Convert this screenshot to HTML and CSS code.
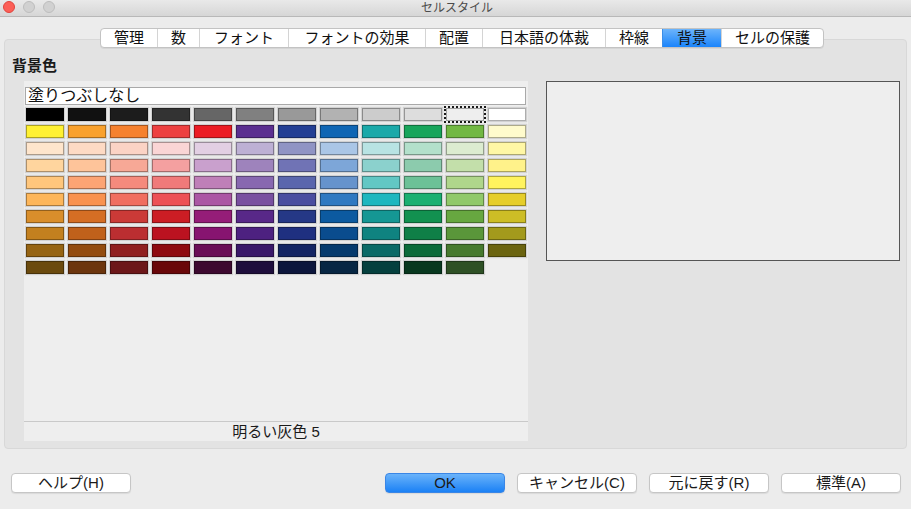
FILE: index.html
```html
<!DOCTYPE html>
<html lang="ja">
<head>
<meta charset="utf-8">
<title>セルスタイル</title>
<link rel="stylesheet" href="styles.css">
</head>
<body>
<div class="titlebar">
  <div class="lights">
    <span class="light red"></span>
    <span class="light"></span>
    <span class="light"></span>
  </div>
  <div class="title">セルスタイル</div>
</div>
<div class="content">
  <div class="tabs">
    <div class="tab">管理</div>
    <div class="tab">数</div>
    <div class="tab">フォント</div>
    <div class="tab">フォントの効果</div>
    <div class="tab">配置</div>
    <div class="tab">日本語の体裁</div>
    <div class="tab">枠線</div>
    <div class="tab active">背景</div>
    <div class="tab">セルの保護</div>
  </div>
  <div class="panel">
    <div class="heading">背景色</div>
    <div class="panel-body">
      <div class="colorbox">
        <div class="nofill">塗りつぶしなし</div>
        <div class="grid">
          <span class="sw" style="background:#000000"></span>
          <span class="sw" style="background:#111111"></span>
          <span class="sw" style="background:#1c1c1c"></span>
          <span class="sw" style="background:#333333"></span>
          <span class="sw" style="background:#666666"></span>
          <span class="sw" style="background:#808080"></span>
          <span class="sw" style="background:#999999"></span>
          <span class="sw" style="background:#b2b2b2"></span>
          <span class="sw" style="background:#cccccc"></span>
          <span class="sw" style="background:#dddddd"></span>
          <span class="sw selected" style="background:#eeeeee"></span>
          <span class="sw" style="background:#ffffff"></span>

          <span class="sw" style="background:#fff133"></span>
          <span class="sw" style="background:#f9a12d"></span>
          <span class="sw" style="background:#f6812e"></span>
          <span class="sw" style="background:#ed4040"></span>
          <span class="sw" style="background:#ec1c24"></span>
          <span class="sw" style="background:#5b2f90"></span>
          <span class="sw" style="background:#233f94"></span>
          <span class="sw" style="background:#0f66b4"></span>
          <span class="sw" style="background:#1ba9a9"></span>
          <span class="sw" style="background:#18a55b"></span>
          <span class="sw" style="background:#72b843"></span>
          <span class="sw" style="background:#fffbcc"></span>

          <span class="sw" style="background:#fee5cc"></span>
          <span class="sw" style="background:#fddac4"></span>
          <span class="sw" style="background:#fbd3c5"></span>
          <span class="sw" style="background:#fad5d5"></span>
          <span class="sw" style="background:#e2cfe3"></span>
          <span class="sw" style="background:#bdb0d4"></span>
          <span class="sw" style="background:#9094c4"></span>
          <span class="sw" style="background:#aac6e6"></span>
          <span class="sw" style="background:#b8e3e3"></span>
          <span class="sw" style="background:#b3e0cb"></span>
          <span class="sw" style="background:#dcecd0"></span>
          <span class="sw" style="background:#fff7a5"></span>

          <span class="sw" style="background:#ffd59e"></span>
          <span class="sw" style="background:#fec49a"></span>
          <span class="sw" style="background:#f7a896"></span>
          <span class="sw" style="background:#f4a0a0"></span>
          <span class="sw" style="background:#c9a0cd"></span>
          <span class="sw" style="background:#9e83bc"></span>
          <span class="sw" style="background:#7073b5"></span>
          <span class="sw" style="background:#7da6d8"></span>
          <span class="sw" style="background:#8bd1cd"></span>
          <span class="sw" style="background:#8ccbad"></span>
          <span class="sw" style="background:#c3dfaa"></span>
          <span class="sw" style="background:#fff28a"></span>

          <span class="sw" style="background:#ffc67c"></span>
          <span class="sw" style="background:#fca474"></span>
          <span class="sw" style="background:#f58a7d"></span>
          <span class="sw" style="background:#f07a7a"></span>
          <span class="sw" style="background:#bf7fb8"></span>
          <span class="sw" style="background:#8868b0"></span>
          <span class="sw" style="background:#5a66ad"></span>
          <span class="sw" style="background:#6693cc"></span>
          <span class="sw" style="background:#62c7c4"></span>
          <span class="sw" style="background:#6cc197"></span>
          <span class="sw" style="background:#afd68b"></span>
          <span class="sw" style="background:#fff35e"></span>

          <span class="sw" style="background:#fdb65a"></span>
          <span class="sw" style="background:#f9924f"></span>
          <span class="sw" style="background:#f06e60"></span>
          <span class="sw" style="background:#ed5055"></span>
          <span class="sw" style="background:#ab57a4"></span>
          <span class="sw" style="background:#7950a0"></span>
          <span class="sw" style="background:#4b4ea0"></span>
          <span class="sw" style="background:#2f79c1"></span>
          <span class="sw" style="background:#1eb7bf"></span>
          <span class="sw" style="background:#1bb071"></span>
          <span class="sw" style="background:#91c96a"></span>
          <span class="sw" style="background:#e6ce2a"></span>

          <span class="sw" style="background:#d98e2b"></span>
          <span class="sw" style="background:#d56e24"></span>
          <span class="sw" style="background:#cb3a37"></span>
          <span class="sw" style="background:#cc1d24"></span>
          <span class="sw" style="background:#951d78"></span>
          <span class="sw" style="background:#582888"></span>
          <span class="sw" style="background:#253886"></span>
          <span class="sw" style="background:#0c5aa0"></span>
          <span class="sw" style="background:#159794"></span>
          <span class="sw" style="background:#129150"></span>
          <span class="sw" style="background:#67a740"></span>
          <span class="sw" style="background:#cdbd26"></span>

          <span class="sw" style="background:#c3801f"></span>
          <span class="sw" style="background:#c0611b"></span>
          <span class="sw" style="background:#bb2e31"></span>
          <span class="sw" style="background:#bb1220"></span>
          <span class="sw" style="background:#871470"></span>
          <span class="sw" style="background:#4d2180"></span>
          <span class="sw" style="background:#1f3080"></span>
          <span class="sw" style="background:#0a4c8e"></span>
          <span class="sw" style="background:#0f8380"></span>
          <span class="sw" style="background:#0f7f47"></span>
          <span class="sw" style="background:#5a963a"></span>
          <span class="sw" style="background:#a39a1c"></span>

          <span class="sw" style="background:#966413"></span>
          <span class="sw" style="background:#934c10"></span>
          <span class="sw" style="background:#902020"></span>
          <span class="sw" style="background:#8e0a10"></span>
          <span class="sw" style="background:#6a0e57"></span>
          <span class="sw" style="background:#3a1869"></span>
          <span class="sw" style="background:#142563"></span>
          <span class="sw" style="background:#053a6d"></span>
          <span class="sw" style="background:#0b6a67"></span>
          <span class="sw" style="background:#0c6b3a"></span>
          <span class="sw" style="background:#477a2e"></span>
          <span class="sw" style="background:#6b6410"></span>

          <span class="sw" style="background:#6b4a0e"></span>
          <span class="sw" style="background:#6c350d"></span>
          <span class="sw" style="background:#6c1719"></span>
          <span class="sw" style="background:#690709"></span>
          <span class="sw" style="background:#3d0930"></span>
          <span class="sw" style="background:#1e0e3c"></span>
          <span class="sw" style="background:#0c163c"></span>
          <span class="sw" style="background:#072643"></span>
          <span class="sw" style="background:#05403e"></span>
          <span class="sw" style="background:#08381f"></span>
          <span class="sw" style="background:#2e5025"></span>
        </div>
        <div class="spacer"></div>
        <div class="status">明るい灰色 5</div>
      </div>
      <div class="preview"></div>
    </div>
  </div>
  <div class="buttons">
    <button class="btn">ヘルプ(H)</button>
    <div class="btn-group">
      <button class="btn default">OK</button>
      <button class="btn">キャンセル(C)</button>
      <button class="btn">元に戻す(R)</button>
      <button class="btn">標準(A)</button>
    </div>
  </div>
</div>
</body>
</html>
```

FILE: styles.css
```css
* { box-sizing: border-box; }

html, body {
  margin: 0;
  padding: 0;
}

body {
  width: 911px;
  height: 509px;
  overflow: hidden;
  background: #ececec;
  font-family: "Liberation Sans", "Noto Sans CJK JP", sans-serif;
  color: #1a1a1a;
}

.titlebar {
  height: 17px;
  background: linear-gradient(#e9e9e9, #d6d6d6);
  border-bottom: 1px solid #b8b8b8;
  display: flex;
  align-items: flex-start;
  position: relative;
}

.lights {
  display: flex;
  gap: 8px;
  padding: 1px 0 0 3px;
}

.light {
  width: 12px;
  height: 12px;
  border-radius: 50%;
  background: #d1d1d1;
  border: 1px solid #bdbdbd;
}

.light.red {
  background: #fc5f57;
  border-color: #e0443e;
}

.title {
  position: absolute;
  left: 0;
  right: 0;
  top: 1px;
  text-align: center;
  font-size: 12px;
  line-height: 14px;
  color: #4b4b4b;
  padding-left: 3px;
}

.content {
  padding: 0 4px;
}

.tabs {
  display: flex;
  margin: 11px 0 0 96px;
  height: 20px;
  width: max-content;
  background: #fff;
  border: 1px solid #c3c3c3;
  border-radius: 4px;
  position: relative;
  z-index: 1;
  box-shadow: 0 1px 0 rgba(0,0,0,0.06);
  overflow: hidden;
}

.tab {
  font-size: 15px;
  line-height: 18px;
  text-align: center;
  border-left: 1px solid #d4d4d4;
  color: #111;
}

.tab:first-child { border-left: none; }
.tab:nth-child(1) { width: 56px; }
.tab:nth-child(2) { width: 42px; }
.tab:nth-child(3) { width: 89px; }
.tab:nth-child(4) { width: 137px; }
.tab:nth-child(5) { width: 57px; }
.tab:nth-child(6) { width: 123px; }
.tab:nth-child(7) { width: 57px; }
.tab:nth-child(8) { width: 59px; }
.tab:nth-child(9) { width: 102px; }

.tab.active {
  background: linear-gradient(#6cb4fb, #1a84fb);
  border-left-color: #3b8ee8;
}

.panel {
  margin-top: -9px;
  height: 410px;
  background: #e3e3e3;
  border: 1px solid #d8d8d8;
  border-radius: 4px;
  padding: 16px 0 0 7px;
}

.heading {
  font-size: 15px;
  font-weight: bold;
  line-height: 20px;
  color: #1a1a1a;
}

.panel-body {
  display: flex;
  align-items: flex-start;
  margin-top: 5px;
  padding-left: 12px;
}

.colorbox {
  width: 504px;
  height: 360px;
  background: #eeeeee;
  display: flex;
  flex-direction: column;
  padding: 6px 2px 0 1px;
}

.nofill {
  height: 18px;
  background: #fff;
  border: 1px solid #a9a9a9;
  font-size: 16px;
  line-height: 16px;
  padding-left: 2px;
  color: #111;
}

.grid {
  display: grid;
  grid-template-columns: repeat(12, 38px);
  grid-auto-rows: 13px;
  column-gap: 4px;
  row-gap: 4px;
  margin: 3px 0 0 1px;
}

.sw {
  display: block;
  border: 1px solid rgba(0,0,0,0.32);
  box-shadow: 0 0 1px 1px rgba(0,0,0,0.12);
}

.sw.selected {
  outline: 2px dotted #1a1a1a;
  outline-offset: 0;
  box-shadow: none;
}

.spacer { flex: 1; }

.status {
  height: 20px;
  margin: 0 -2px 0 -1px;
  border-top: 1px solid #c9c9c9;
  text-align: center;
  font-size: 15px;
  line-height: 19px;
  color: #1a1a1a;
}

.preview {
  width: 354px;
  height: 180px;
  margin-left: 18px;
  background: #eeeeee;
  border: 1px solid #555;
}

.buttons {
  display: flex;
  margin-top: 24px;
  padding: 0 6px 0 7px;
}

.btn-group {
  display: flex;
  gap: 12px;
  margin-left: auto;
}

.btn {
  width: 120px;
  height: 20px;
  padding: 0;
  background: #fff;
  border: 1px solid #c6c6c6;
  border-radius: 4px;
  box-shadow: 0 1px 1px rgba(0,0,0,0.08);
  font-family: "Liberation Sans", "Noto Sans CJK JP", sans-serif;
  font-size: 15px;
  line-height: 18px;
  color: #1a1a1a;
}

.btn.default {
  background: linear-gradient(#6ab3fa, #1b81f5);
  border-color: #3a86e6;
}
```
